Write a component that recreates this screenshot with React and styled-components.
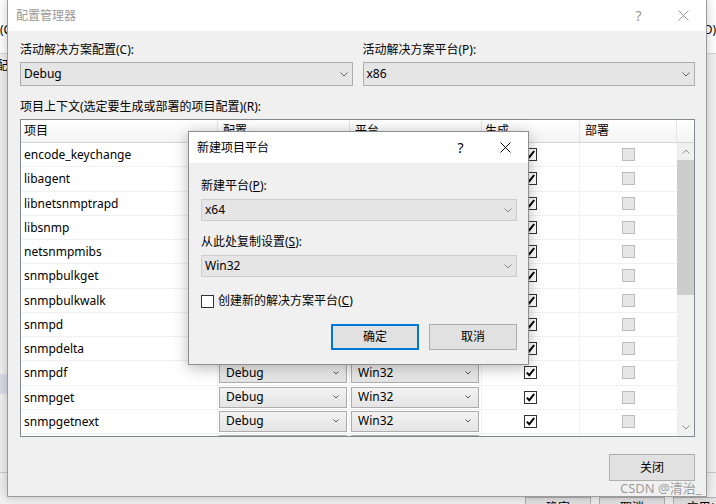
import React from 'react';
import styled, { createGlobalStyle } from 'styled-components';

const GlobalStyle = createGlobalStyle`
  html, body {
    margin: 0;
    padding: 0;
  }
  body {
    width: 716px;
    height: 504px;
    overflow: hidden;
    background: #f0f0f0;
    color: #000;
    font-family: 'Noto Sans', 'Noto Sans CJK SC', sans-serif;
    font-size: 12px;
  }
  * {
    box-sizing: border-box;
  }
`;

const Desktop = styled.div`
  position: relative;
  width: 716px;
  height: 504px;
  overflow: hidden;
  background: #f0f0f0;
`;

/* ---------- window behind ---------- */

const BackWindow = styled.div`
  position: absolute;
  inset: 0;
  display: flex;
  flex-direction: column;
`;

const BackTop = styled.div`
  height: 54px;
  background: #fff;
  border-bottom: 1px solid #d4d4d4;
  display: flex;
  justify-content: space-between;
  align-items: flex-start;
  padding-top: 22px;
  line-height: 16px;
`;

const BackMiddle = styled.div`
  flex: 1;
  display: flex;
  flex-direction: column;
  line-height: 16px;
  padding-top: 4px;
`;

const BackGlyph = styled.span`
  margin-left: -4px;
`;

const BackHighlight = styled.div`
  margin-top: 300px;
  width: 7px;
  height: 20px;
  background: #d9dbe6;
`;

const BackFooter = styled.div`
  height: 32px;
  border-top: 1px solid #c8c8c8;
  display: flex;
  gap: 8px;
  padding: 24px 0 0 525px;
`;

const BackButton = styled.div`
  width: 66px;
  height: 23px;
  flex: none;
  background: #e1e1e1;
  border: 1px solid #adadad;
  text-align: center;
  line-height: 20px;
`;

/* ---------- shared bits ---------- */

const TitleBar = styled.div`
  height: ${p => p.$h}px;
  background: #fff;
  display: flex;
  align-items: center;
  padding-left: 8px;
  color: ${p => (p.$active ? '#000' : '#999')};
  flex: none;
`;

const TitleText = styled.div`
  flex: 1;
  line-height: 16px;
`;

const TitleButton = styled.div`
  width: 45px;
  height: 100%;
  display: flex;
  align-items: center;
  justify-content: center;
  font-size: 14px;
`;

const Label = styled.div`
  line-height: 16px;
  margin-top: ${p => p.$mt || 0}px;
  white-space: nowrap;
`;

const Select = styled.div`
  height: ${p => p.$h}px;
  margin-top: ${p => p.$mt}px;
  background: #e5e5e5;
  border: 1px solid ${p => p.$border};
  display: flex;
  align-items: center;
  justify-content: space-between;
  padding: 0 ${p => p.$pr}px 0 ${p => p.$pl}px;
  line-height: 16px;
`;

const U = styled.span`
  text-decoration: underline;
`;

const Chevron = ({ w = 8, h = 4, color = '#606060' }) => (
  <svg width={w} height={h + 1} viewBox={`0 0 ${w} ${h + 1}`}>
    <polyline points={`0.5,0.5 ${w / 2},${h} ${w - 0.5},0.5`} fill="none" stroke={color} strokeWidth="1" />
  </svg>
);

const ChevronUp = ({ color = '#8a8a8a' }) => (
  <svg width="8" height="5" viewBox="0 0 8 5">
    <polyline points="0.5,4.5 4,1 7.5,4.5" fill="none" stroke={color} strokeWidth="1" />
  </svg>
);

const CloseGlyph = ({ color }) => (
  <svg width="11" height="11" viewBox="0 0 11 11">
    <path d="M0.5 0.5 L10.5 10.5 M10.5 0.5 L0.5 10.5" stroke={color} strokeWidth="1" fill="none" />
  </svg>
);

const CheckMark = () => (
  <svg width="11" height="11" viewBox="0 0 11 11">
    <polyline points="1.8,5.6 4.3,8.2 9.2,2" fill="none" stroke="#000" strokeWidth="2" />
  </svg>
);

/* ---------- main dialog ---------- */

const MainDialog = styled.div`
  position: absolute;
  left: 7px;
  top: -1px;
  width: 700px;
  height: 498px;
  background: #f0f0f0;
  border: 1px solid #9b9b9b;
  box-shadow: 0 0 10px rgba(0, 0, 0, 0.22);
  display: flex;
  flex-direction: column;
`;

const MainBody = styled.div`
  flex: 1;
  display: flex;
  flex-direction: column;
  padding: 11px 11px 0 12px;
`;

const TwoCols = styled.div`
  display: grid;
  grid-template-columns: 1fr 1fr;
  column-gap: 10px;
`;

const Field = styled.div`
  display: flex;
  flex-direction: column;
`;

const Table = styled.div`
  margin-top: 4px;
  height: 318px;
  border: 1px solid #828790;
  background: #fff;
  display: flex;
  flex-direction: column;
  overflow: hidden;
`;

const COLS = '197px 132px 132px 98px 97px';

const HeaderRow = styled.div`
  height: 23px;
  flex: none;
  display: grid;
  grid-template-columns: ${COLS} 17px;
  background: linear-gradient(#ffffff, #f4f4f4);
  border-bottom: 1px solid #d5d5d5;
`;

const HeaderCell = styled.div`
  border-right: 1px solid #e5e5e5;
  padding-left: ${p => p.$pl}px;
  line-height: 22px;
  &:last-child {
    border-right: none;
  }
`;

const TableBody = styled.div`
  flex: 1;
  display: flex;
  min-height: 0;
`;

const Rows = styled.div`
  flex: 1;
  overflow: hidden;
`;

const Row = styled.div`
  height: 24.25px;
  display: grid;
  grid-template-columns: ${COLS};
  border-bottom: 1px solid #f0f0f0;
`;

const Cell = styled.div`
  border-right: 1px solid #f0f0f0;
  display: flex;
  align-items: center;
  justify-content: ${p => (p.$center ? 'center' : 'flex-start')};
  padding: ${p => p.$pad || '0'};
  &:last-child {
    border-right: none;
  }
`;

const Combo = styled.div`
  width: 100%;
  height: 21px;
  border: 1px solid #acacac;
  background: linear-gradient(#f3f3f3, #e4e4e4);
  display: flex;
  align-items: center;
  justify-content: space-between;
  padding: 0 7px 0 6px;
  line-height: 16px;
`;

const CheckBox = styled.div`
  width: 13px;
  height: 13px;
  border: 1px solid ${p => (p.$disabled ? '#bcbcbc' : '#333')};
  background: ${p => (p.$disabled ? '#e6e6e6' : '#fff')};
  display: flex;
  align-items: center;
  justify-content: center;
  flex: none;
`;

const ScrollBar = styled.div`
  width: 17px;
  flex: none;
  background: #f0f0f0;
  display: flex;
  flex-direction: column;
`;

const ScrollArrow = styled.div`
  height: 17px;
  display: flex;
  align-items: center;
  justify-content: center;
  flex: none;
`;

const ScrollThumb = styled.div`
  height: 135px;
  background: #cdcdcd;
  flex: none;
`;

const ScrollSpace = styled.div`
  flex: 1;
`;

const Footer = styled.div`
  display: flex;
  justify-content: flex-end;
  margin-top: 17px;
`;

const Button = styled.div`
  width: ${p => p.$w}px;
  height: ${p => p.$h}px;
  background: #e1e1e1;
  border: ${p => (p.$primary ? '2px solid #0078d7' : '1px solid #adadad')};
  display: flex;
  align-items: center;
  justify-content: center;
  line-height: 16px;
`;

/* ---------- modal ---------- */

const Modal = styled.div`
  position: absolute;
  left: 188px;
  top: 131px;
  width: 341px;
  height: 234px;
  background: #f0f0f0;
  border: 1px solid #8e8e8e;
  box-shadow: 0 3px 14px rgba(0, 0, 0, 0.28);
  display: flex;
  flex-direction: column;
`;

const ModalBody = styled.div`
  flex: 1;
  display: flex;
  flex-direction: column;
  padding: 15px 11px 0 12px;
`;

const CheckRow = styled.div`
  display: flex;
  align-items: center;
  gap: 4px;
  margin-top: 16px;
  line-height: 16px;
`;

const ModalButtons = styled.div`
  display: flex;
  justify-content: flex-end;
  gap: 10px;
  margin-top: 15px;
`;

const Watermark = styled.div`
  position: absolute;
  left: 620px;
  top: 480px;
  font-size: 13px;
  line-height: 17px;
  color: rgba(140, 140, 140, 0.85);
  white-space: nowrap;
`;

const projects = [
  'encode_keychange',
  'libagent',
  'libnetsnmptrapd',
  'libsnmp',
  'netsnmpmibs',
  'snmpbulkget',
  'snmpbulkwalk',
  'snmpd',
  'snmpdelta',
  'snmpdf',
  'snmpget',
  'snmpgetnext',
  'snmpset',
];

function App() {
  return (
    <>
      <GlobalStyle />
      <Desktop>
        <BackWindow>
          <BackTop>
            <span>(C):</span>
            <span>(D)</span>
          </BackTop>
          <BackMiddle>
            <BackGlyph>配</BackGlyph>
            <BackHighlight />
          </BackMiddle>
          <BackFooter>
            <BackButton>确定</BackButton>
            <BackButton>取消</BackButton>
            <BackButton>应用(A)</BackButton>
          </BackFooter>
        </BackWindow>

        <MainDialog>
          <TitleBar $h={31}>
            <TitleText>配置管理器</TitleText>
            <TitleButton>?</TitleButton>
            <TitleButton>
              <CloseGlyph color="#999" />
            </TitleButton>
          </TitleBar>
          <MainBody>
            <TwoCols>
              <Field>
                <Label>活动解决方案配置(C):</Label>
                <Select $h={24} $mt={4} $border="#adadad" $pl={3} $pr={4}>
                  Debug
                  <Chevron />
                </Select>
              </Field>
              <Field>
                <Label>活动解决方案平台(P):</Label>
                <Select $h={24} $mt={4} $border="#adadad" $pl={3} $pr={4}>
                  x86
                  <Chevron />
                </Select>
              </Field>
            </TwoCols>
            <Label $mt={13}>项目上下文(选定要生成或部署的项目配置)(R):</Label>
            <Table>
              <HeaderRow>
                <HeaderCell $pl={3}>项目</HeaderCell>
                <HeaderCell $pl={5}>配置</HeaderCell>
                <HeaderCell $pl={5}>平台</HeaderCell>
                <HeaderCell $pl={3}>生成</HeaderCell>
                <HeaderCell $pl={5}>部署</HeaderCell>
                <HeaderCell />
              </HeaderRow>
              <TableBody>
                <Rows>
                  {projects.map(name => (
                    <Row key={name}>
                      <Cell $pad="0 0 0 3px">{name}</Cell>
                      <Cell $pad="1px 2px 1px 1px">
                        <Combo>
                          Debug
                          <Chevron w={6} h={3} color="#555" />
                        </Combo>
                      </Cell>
                      <Cell $pad="1px 2px 1px 1px">
                        <Combo>
                          Win32
                          <Chevron w={6} h={3} color="#555" />
                        </Combo>
                      </Cell>
                      <Cell $center>
                        <CheckBox>
                          <CheckMark />
                        </CheckBox>
                      </Cell>
                      <Cell $center>
                        <CheckBox $disabled />
                      </Cell>
                    </Row>
                  ))}
                </Rows>
                <ScrollBar>
                  <ScrollArrow>
                    <ChevronUp />
                  </ScrollArrow>
                  <ScrollThumb />
                  <ScrollSpace />
                  <ScrollArrow>
                    <Chevron color="#8a8a8a" />
                  </ScrollArrow>
                </ScrollBar>
              </TableBody>
            </Table>
            <Footer>
              <Button $w={86} $h={27}>关闭</Button>
            </Footer>
          </MainBody>
        </MainDialog>

        <Modal>
          <TitleBar $h={31} $active>
            <TitleText>新建项目平台</TitleText>
            <TitleButton>?</TitleButton>
            <TitleButton>
              <CloseGlyph color="#000" />
            </TitleButton>
          </TitleBar>
          <ModalBody>
            <Label>
              新建平台(<U>P</U>):
            </Label>
            <Select $h={22} $mt={5} $border="#cccccc" $pl={3} $pr={4}>
              x64
              <Chevron color="#888" />
            </Select>
            <Label $mt={13}>
              从此处复制设置(<U>S</U>):
            </Label>
            <Select $h={22} $mt={5} $border="#cccccc" $pl={3} $pr={4}>
              Win32
              <Chevron color="#888" />
            </Select>
            <CheckRow>
              <CheckBox />
              <span>
                创建新的解决方案平台(<U>C</U>)
              </span>
            </CheckRow>
            <ModalButtons>
              <Button $w={88} $h={26} $primary>确定</Button>
              <Button $w={88} $h={26}>取消</Button>
            </ModalButtons>
          </ModalBody>
        </Modal>

        <Watermark>CSDN @清治_</Watermark>
      </Desktop>
    </>
  );
}

export default App;
